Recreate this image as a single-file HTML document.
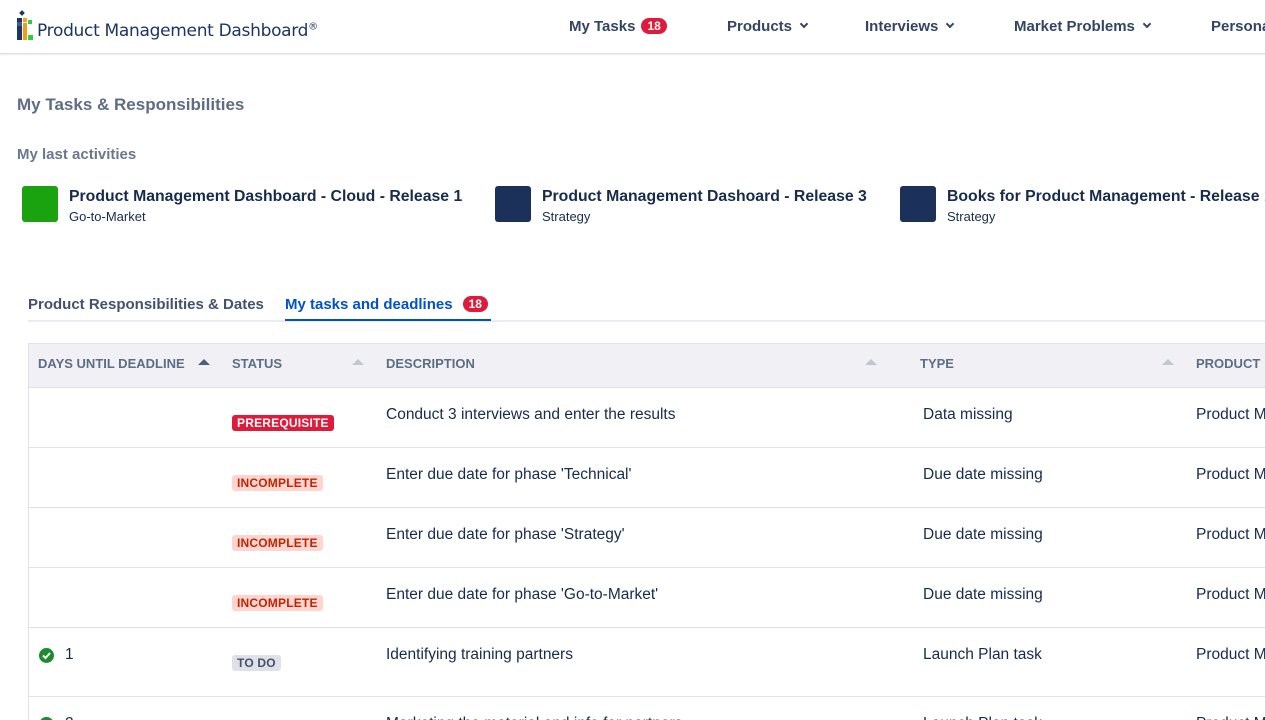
<!DOCTYPE html>
<html><head><meta charset="utf-8"><style>
*{box-sizing:border-box;margin:0;padding:0}
html,body{width:1265px;height:720px;overflow:hidden}
body{background:#fff;font-family:"Liberation Sans",Arial,sans-serif;color:#172b4d;position:relative}
.hdr{position:absolute;left:0;top:0;width:1265px;height:54px;border-bottom:1px solid #ddd;box-shadow:0 1px 2px rgba(0,0,0,.08)}
.logo{position:absolute;left:37px;top:21px;font-family:"DejaVu Sans",sans-serif;font-size:17px;color:#1c3566;letter-spacing:-0.3px}
.logo sup{font-size:10px}
.nav{position:absolute;top:18px;font-size:15px;font-weight:bold;color:#344563}
.badge{display:inline-block;background:#de1b3a;color:#fff;border-radius:9px;font-size:12px;font-weight:bold;padding:1px 6px;margin-left:6px;vertical-align:1px}
.car{display:inline-block;width:6px;height:6px;border-right:2px solid #344563;border-bottom:2px solid #344563;transform:rotate(45deg);margin-left:9px;vertical-align:4px}
.h1{position:absolute;left:17px;top:95px;font-size:17px;font-weight:bold;color:#5e6c84}
.h2{position:absolute;left:17px;top:146px;font-size:15px;font-weight:bold;color:#6b778c}
.act{position:absolute;top:186px}
.act .sq{position:absolute;left:0;top:0;width:36px;height:36px;border-radius:3px}
.act .t{position:absolute;left:47px;top:2px;white-space:nowrap;font-size:15.8px;font-weight:bold;color:#172b4d}
.act .s{position:absolute;left:47px;top:23px;white-space:nowrap;font-size:13px;color:#172b4d}
.tab{position:absolute;top:296px;font-size:15px;font-weight:bold}
.tabline{position:absolute;left:28px;top:320px;width:1237px;height:2px;background:#ebecf0}
.tbl{position:absolute;left:28px;top:343px;width:1250px;border:1px solid #dfe1e6;border-right:none;border-bottom:none}
.th{height:44px;background:#f0f0f5;border-bottom:1px solid #dfe1e6;position:relative}
.th div{position:absolute;top:12px;font-size:13px;font-weight:bold;color:#5e6c84}
.tri{position:absolute;top:15px;width:0;height:0;border-left:6px solid transparent;border-right:6px solid transparent;border-bottom:6px solid #c1c7d0}
.row{height:60px;border-bottom:1px solid #dfe1e6;position:relative;font-size:15.5px;overflow:hidden}
.row div{position:absolute;white-space:nowrap}
.lz{font-size:12px;font-weight:bold;padding:1px 5px;border-radius:3px;top:27px;letter-spacing:0.2px}
.pre{background:#de1b3a;color:#fff}
.inc{background:#ffd5d2;color:#bf2600}
.todo{background:#dfe1e6;color:#42526e}
.chk{width:15px;height:15px;border-radius:50%;background:#1f8a2f;top:20px;left:10px}
</style></head><body>
<div class="hdr">
<svg style="position:absolute;left:16px;top:10px" width="20" height="30">
<rect x="4" y="1" width="4" height="4" fill="#1c3566" transform="rotate(45 6 3)"/>
<rect x="1" y="8" width="5" height="22" fill="#1c3566"/>
<rect x="1" y="12" width="5" height="4" fill="#3a5a9a"/>
<rect x="7" y="8" width="4" height="4" fill="#f0a030"/>
<rect x="7" y="13" width="4" height="17" fill="#f39c12"/>
<rect x="12" y="10" width="4" height="4" fill="#2ecc40"/>
<rect x="12" y="25" width="5" height="5" fill="#2ecc40"/>
</svg>
<div class="logo">Product Management Dashboard<sup>®</sup></div>
<div class="nav" style="left:569px">My Tasks<span class="badge">18</span></div>
<div class="nav" style="left:727px">Products<span class="car"></span></div>
<div class="nav" style="left:865px">Interviews<span class="car"></span></div>
<div class="nav" style="left:1014px">Market Problems<span class="car"></span></div>
<div class="nav" style="left:1211px">Personal</div>
</div>
<div class="h1">My Tasks &amp; Responsibilities</div>
<div class="h2">My last activities</div>
<div class="act" style="left:22px"><div class="sq" style="background:#1aa30f"></div><div class="t">Product Management Dashboard - Cloud - Release 1</div><div class="s">Go-to-Market</div></div>
<div class="act" style="left:495px"><div class="sq" style="background:#1c3159"></div><div class="t">Product Management Dashoard - Release 3</div><div class="s">Strategy</div></div>
<div class="act" style="left:900px"><div class="sq" style="background:#1c3159"></div><div class="t">Books for Product Management - Release 1</div><div class="s">Strategy</div></div>
<div class="tab" style="left:28px;color:#42526e">Product Responsibilities &amp; Dates</div>
<div class="tab" style="left:285px;color:#0052cc">My tasks and deadlines<span class="badge" style="margin-left:10px">18</span></div>
<div class="tabline"></div>
<div style="position:absolute;left:285px;top:319px;width:206px;height:2px;background:#0052cc"></div>
<div class="tbl">
<div class="th">
<div style="left:9px">DAYS UNTIL DEADLINE</div><span class="tri" style="left:169px;border-bottom-color:#505f79"></span>
<div style="left:203px">STATUS</div><span class="tri" style="left:323px"></span>
<div style="left:357px">DESCRIPTION</div><span class="tri" style="left:836px"></span>
<div style="left:891px">TYPE</div><span class="tri" style="left:1133px"></span>
<div style="left:1167px">PRODUCT</div>
</div>
<div class="row"><div class="lz pre" style="left:203px">PREREQUISITE</div><div style="left:357px;top:18px">Conduct 3 interviews and enter the results</div><div style="left:894px;top:18px">Data missing</div><div style="left:1167px;top:18px">Product M</div></div>
<div class="row"><div class="lz inc" style="left:203px">INCOMPLETE</div><div style="left:357px;top:18px">Enter due date for phase 'Technical'</div><div style="left:894px;top:18px">Due date missing</div><div style="left:1167px;top:18px">Product M</div></div>
<div class="row"><div class="lz inc" style="left:203px">INCOMPLETE</div><div style="left:357px;top:18px">Enter due date for phase 'Strategy'</div><div style="left:894px;top:18px">Due date missing</div><div style="left:1167px;top:18px">Product M</div></div>
<div class="row"><div class="lz inc" style="left:203px">INCOMPLETE</div><div style="left:357px;top:18px">Enter due date for phase 'Go-to-Market'</div><div style="left:894px;top:18px">Due date missing</div><div style="left:1167px;top:18px">Product M</div></div>
<div class="row" style="height:69px"><div class="chk"><svg width="15" height="15"><path d="M4 7.5l2.5 2.5 4.5-5" stroke="#fff" stroke-width="2" fill="none"/></svg></div><div style="left:36px;top:18px">1</div><div class="lz todo" style="left:203px">TO DO</div><div style="left:357px;top:18px">Identifying training partners</div><div style="left:894px;top:18px">Launch Plan task</div><div style="left:1167px;top:18px">Product M</div></div>
<div class="row" style="height:23px;border-bottom:none"><div class="chk"><svg width="15" height="15"><path d="M4 7.5l2.5 2.5 4.5-5" stroke="#fff" stroke-width="2" fill="none"/></svg></div><div style="left:36px;top:18px">2</div><div style="left:357px;top:18px">Marketing the material and info for partners</div><div style="left:894px;top:18px">Launch Plan task</div><div style="left:1167px;top:18px">Product M</div></div>
</div>
</body></html>
